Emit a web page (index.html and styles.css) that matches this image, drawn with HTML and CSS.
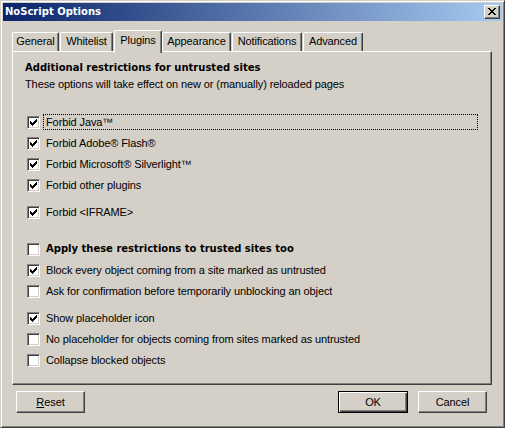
FILE: index.html
```html
<!DOCTYPE html>
<html lang="en">
<head>
<meta charset="utf-8">
<title>NoScript Options</title>
<link rel="stylesheet" href="styles.css">
</head>
<body>
<div class="window">
  <div class="titlebar">
    <span class="title">NoScript Options</span>
    <span class="close-btn">
      <svg width="8" height="7" viewBox="0 0 8 7" shape-rendering="crispEdges"><path d="M0 0h2v1h-2zM6 0h2v1h-2zM1 1h2v1h-2zM5 1h2v1h-2zM2 2h4v1h-4zM3 3h2v1h-2zM2 4h4v1h-4zM1 5h2v1h-2zM5 5h2v1h-2zM0 6h2v1h-2zM6 6h2v1h-2z" fill="#000"/></svg>
    </span>
  </div>

  <div class="tabs">
    <div class="tab tab-general">General</div>
    <div class="tab tab-whitelist">Whitelist</div>
    <div class="tab tab-plugins selected">Plugins</div>
    <div class="tab tab-appearance">Appearance</div>
    <div class="tab tab-notifications">Notifications</div>
    <div class="tab tab-advanced">Advanced</div>
  </div>

  <div class="panel">
    <div class="heading">Additional restrictions for untrusted sites</div>
    <div class="subtitle">These options will take effect on new or (manually) reloaded pages</div>

    <div class="row first">
      <span class="cb checked"><svg width="7" height="7" viewBox="0 0 7 7" shape-rendering="crispEdges"><path d="M6 0h1v1h-1zM5 1h2v1h-2zM0 2h1v1h-1zM4 2h3v1h-3zM0 3h2v1h-2zM3 3h3v1h-3zM0 4h5v1h-5zM1 5h3v1h-3zM2 6h1v1h-1z" fill="#000"/></svg></span>
      <span class="label focus">Forbid Java™</span>
    </div>
    <div class="row">
      <span class="cb checked"><svg width="7" height="7" viewBox="0 0 7 7" shape-rendering="crispEdges"><path d="M6 0h1v1h-1zM5 1h2v1h-2zM0 2h1v1h-1zM4 2h3v1h-3zM0 3h2v1h-2zM3 3h3v1h-3zM0 4h5v1h-5zM1 5h3v1h-3zM2 6h1v1h-1z" fill="#000"/></svg></span>
      <span class="label">Forbid Adobe® Flash®</span>
    </div>
    <div class="row">
      <span class="cb checked"><svg width="7" height="7" viewBox="0 0 7 7" shape-rendering="crispEdges"><path d="M6 0h1v1h-1zM5 1h2v1h-2zM0 2h1v1h-1zM4 2h3v1h-3zM0 3h2v1h-2zM3 3h3v1h-3zM0 4h5v1h-5zM1 5h3v1h-3zM2 6h1v1h-1z" fill="#000"/></svg></span>
      <span class="label">Forbid Microsoft® Silverlight™</span>
    </div>
    <div class="row">
      <span class="cb checked"><svg width="7" height="7" viewBox="0 0 7 7" shape-rendering="crispEdges"><path d="M6 0h1v1h-1zM5 1h2v1h-2zM0 2h1v1h-1zM4 2h3v1h-3zM0 3h2v1h-2zM3 3h3v1h-3zM0 4h5v1h-5zM1 5h3v1h-3zM2 6h1v1h-1z" fill="#000"/></svg></span>
      <span class="label">Forbid other plugins</span>
    </div>
    <div class="row gap-sm">
      <span class="cb checked"><svg width="7" height="7" viewBox="0 0 7 7" shape-rendering="crispEdges"><path d="M6 0h1v1h-1zM5 1h2v1h-2zM0 2h1v1h-1zM4 2h3v1h-3zM0 3h2v1h-2zM3 3h3v1h-3zM0 4h5v1h-5zM1 5h3v1h-3zM2 6h1v1h-1z" fill="#000"/></svg></span>
      <span class="label">Forbid &lt;IFRAME&gt;</span>
    </div>

    <div class="row gap-lg">
      <span class="cb"></span>
      <span class="label strong">Apply these restrictions to trusted sites too</span>
    </div>
    <div class="row">
      <span class="cb checked"><svg width="7" height="7" viewBox="0 0 7 7" shape-rendering="crispEdges"><path d="M6 0h1v1h-1zM5 1h2v1h-2zM0 2h1v1h-1zM4 2h3v1h-3zM0 3h2v1h-2zM3 3h3v1h-3zM0 4h5v1h-5zM1 5h3v1h-3zM2 6h1v1h-1z" fill="#000"/></svg></span>
      <span class="label">Block every object coming from a site marked as untrusted</span>
    </div>
    <div class="row">
      <span class="cb"></span>
      <span class="label">Ask for confirmation before temporarily unblocking an object</span>
    </div>
    <div class="row gap-sm">
      <span class="cb checked"><svg width="7" height="7" viewBox="0 0 7 7" shape-rendering="crispEdges"><path d="M6 0h1v1h-1zM5 1h2v1h-2zM0 2h1v1h-1zM4 2h3v1h-3zM0 3h2v1h-2zM3 3h3v1h-3zM0 4h5v1h-5zM1 5h3v1h-3zM2 6h1v1h-1z" fill="#000"/></svg></span>
      <span class="label">Show placeholder icon</span>
    </div>
    <div class="row">
      <span class="cb"></span>
      <span class="label">No placeholder for objects coming from sites marked as untrusted</span>
    </div>
    <div class="row">
      <span class="cb"></span>
      <span class="label">Collapse blocked objects</span>
    </div>
  </div>

  <div class="buttons">
    <button class="btn"><u>R</u>eset</button>
    <button class="btn default">OK</button>
    <button class="btn cancel">Cancel</button>
  </div>
</div>
</body>
</html>
```

FILE: styles.css
```css
* { box-sizing: border-box; }
html, body { margin: 0; padding: 0; }
body {
  background: #d4d0c8;
  font-family: "Liberation Sans", Arial, sans-serif;
  font-size: 11px;
  letter-spacing: -0.1px;
  color: #000;
}

.window {
  width: 505px;
  height: 428px;
  background: #d4d0c8;
  border: 1px solid;
  border-color: #d4d0c8 #404040 #404040 #d4d0c8;
  box-shadow: inset 1px 1px #fff, inset -1px -1px #808080;
  padding: 2px;
  display: flex;
  flex-direction: column;
}

/* Title bar */
.titlebar {
  height: 18px;
  flex: none;
  display: flex;
  align-items: center;
  padding: 0 2px;
  background: linear-gradient(to right, #0a246a, #a6caf0);
}
.title {
  font: bold 10px/18px "DejaVu Sans", sans-serif;
  letter-spacing: 0;
  color: #fff;
}
.close-btn {
  margin-left: auto;
  width: 16px;
  height: 14px;
  background: #d4d0c8;
  border: 1px solid;
  border-color: #fff #404040 #404040 #fff;
  box-shadow: inset -1px -1px #808080;
  padding: 2px 0 0 3px;
}
.close-btn svg { display: block; }

/* Tabs */
.tabs {
  display: flex;
  align-items: flex-end;
  height: 21px;
  margin: 9px 0 0 9px;
  flex: none;
}
.tab {
  height: 19px;
  margin-right: 1px;
  border-top: 1px solid #fff;
  border-left: 1px solid #fff;
  border-right: 1px solid #404040;
  border-radius: 2px 2px 0 0;
  box-shadow: inset -1px 0 #808080;
  padding-top: 2px;
  line-height: 13px;
  text-align: center;
  background: #d4d0c8;
}
.tab-general { width: 47px; }
.tab-whitelist { width: 53px; }
.tab-plugins { width: 48px; margin-right: 0; }
.tab-appearance { width: 69px; }
.tab-notifications { width: 70px; }
.tab-advanced { width: 60px; }
.tab.selected {
  height: 23px;
  margin-bottom: -2px;
  padding-top: 3px;
  position: relative;
  z-index: 1;
}

/* Panel */
.panel {
  flex: none;
  width: 480px;
  height: 334px;
  margin-left: 9px;
  border: 1px solid;
  border-color: #fff #404040 #404040 #fff;
  box-shadow: inset -1px -1px #808080;
  padding: 8px 13px 0 12px;
}
.heading {
  font: bold 10px/16px "DejaVu Sans", sans-serif;
  letter-spacing: 0;
}
.subtitle {
  line-height: 16px;
}

.row {
  display: flex;
  align-items: flex-start;
  height: 16px;
  margin: 5px 0 0 2px;
}
.row.first { margin-top: 22px; }
.row.gap-sm { margin-top: 11px; }
.row.gap-lg { margin-top: 21px; }

.cb {
  flex: none;
  width: 13px;
  height: 13px;
  margin-top: 2px;
  background: #fff;
  border: 1px solid;
  border-color: #808080 #fff #fff #808080;
  box-shadow: inset 1px 1px #404040, inset -1px -1px #d4d0c8;
  padding: 2px;
}
.cb svg { display: block; }

.label {
  margin-left: 3px;
  padding: 0 2px;
  border: 1px dotted transparent;
  line-height: 14px;
  white-space: nowrap;
}
.label.focus {
  flex: 1;
  border-color: #000;
}
.row .label.strong {
  font: bold 10px/14px "DejaVu Sans", sans-serif;
  letter-spacing: 0;
}

/* Buttons */
.buttons {
  display: flex;
  flex: none;
  margin-top: 6px;
  padding: 0 15px 0 13px;
}
.btn {
  -webkit-appearance: none;
  appearance: none;
  width: 69px;
  height: 22px;
  padding: 0;
  margin: 0;
  font: inherit;
  letter-spacing: inherit;
  color: #000;
  line-height: 20px;
  text-align: center;
  background: #d4d0c8;
  border: 1px solid;
  border-color: #fff #404040 #404040 #fff;
  box-shadow: inset -1px -1px #808080;
}
.btn.default {
  margin-left: auto;
  width: 70px;
  border-color: #000;
  box-shadow: inset 1px 1px #fff, inset -1px -1px #404040, inset -2px -2px #808080;
}
.btn.cancel { margin-left: 10px; }
```
